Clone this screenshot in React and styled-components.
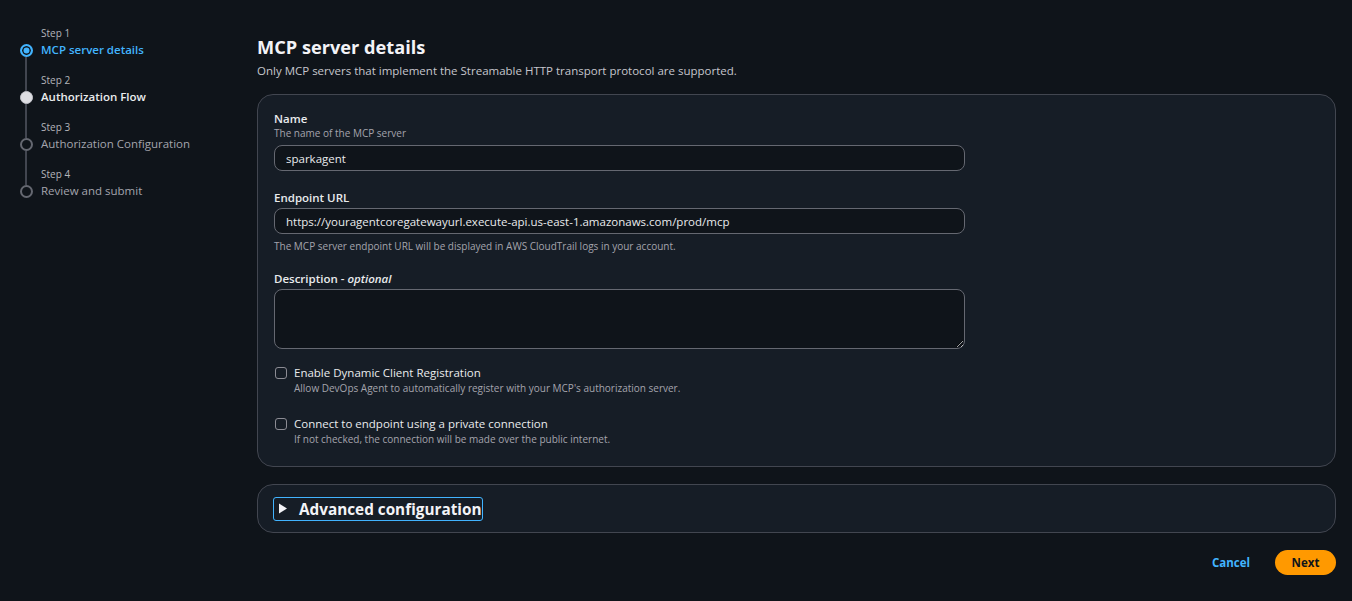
import React from 'react'
import styled, { createGlobalStyle } from 'styled-components'

const GlobalStyle = createGlobalStyle`
  html, body {
    margin: 0;
    padding: 0;
    background: #0f141a;
    color-scheme: dark;
  }
  body {
    font-family: "Open Sans", "Noto Sans", sans-serif;
    color: #dedee3;
  }
  * { box-sizing: border-box; }
`

const steps = [
  { label: 'Step 1', title: 'MCP server details', state: 'active' },
  { label: 'Step 2', title: 'Authorization Flow', state: 'next' },
  { label: 'Step 3', title: 'Authorization Configuration', state: 'pending' },
  { label: 'Step 4', title: 'Review and submit', state: 'pending' },
]

const App = () => {
  return (
    <>
      <GlobalStyle />
      <Page>
        <Sidebar>
          {steps.map((s, i) => (
            <Step key={s.label}>
              <Track>
                <Line $hidden={i === 0} $top />
                <Dot $state={s.state} />
                <Line $hidden={i === steps.length - 1} />
              </Track>
              <StepText>
                <StepLabel>{s.label}</StepLabel>
                <StepTitle $state={s.state}>{s.title}</StepTitle>
              </StepText>
            </Step>
          ))}
        </Sidebar>
        <Main>
          <Header>
            <h1>MCP server details</h1>
            <p>Only MCP servers that implement the Streamable HTTP transport protocol are supported.</p>
          </Header>
          <Card>
            <Field>
              <Label>Name</Label>
              <Hint $pos="top">The name of the MCP server</Hint>
              <Input defaultValue="sparkagent" />
            </Field>
            <Field>
              <Label>Endpoint URL</Label>
              <Input defaultValue="https://youragentcoregatewayurl.execute-api.us-east-1.amazonaws.com/prod/mcp" />
              <Hint $pos="bottom">The MCP server endpoint URL will be displayed in AWS CloudTrail logs in your account.</Hint>
            </Field>
            <Field $last>
              <Label>Description - <em>optional</em></Label>
              <TextArea />
            </Field>
            <CheckRow>
              <Box />
              <div>
                <CheckLabel>Enable Dynamic Client Registration</CheckLabel>
                <Hint>Allow DevOps Agent to automatically register with your MCP's authorization server.</Hint>
              </div>
            </CheckRow>
            <CheckRow>
              <Box />
              <div>
                <CheckLabel>Connect to endpoint using a private connection</CheckLabel>
                <Hint>If not checked, the connection will be made over the public internet.</Hint>
              </div>
            </CheckRow>
          </Card>
          <Expander>
            <ExpandButton>
              <svg width="10" height="11" viewBox="0 0 10 11">
                <polygon points="1,0.5 9,5.5 1,10.5" fill="#f3f3f7" />
              </svg>
              Advanced configuration
            </ExpandButton>
          </Expander>
          <Actions>
            <LinkButton>Cancel</LinkButton>
            <PrimaryButton>Next</PrimaryButton>
          </Actions>
        </Main>
      </Page>
    </>
  )
}

export default App

const Page = styled.div`
  display: flex;
  min-height: 601px;
`
const Sidebar = styled.nav`
  width: 257px;
  flex-shrink: 0;
  padding: 26px 0 0 20px;
`
const Step = styled.div`
  display: grid;
  grid-template-columns: 12px 1fr;
  column-gap: 9px;
  height: 47px;
`
const Track = styled.div`
  display: flex;
  flex-direction: column;
  align-items: center;
`
const Line = styled.span`
  width: 2px;
  background: ${p => (p.$hidden ? 'transparent' : '#424650')};
  ${p => (p.$top ? 'height: 17.5px;' : 'flex: 1;')}
`
const Dot = styled.span`
  width: 13px;
  height: 13px;
  border-radius: 50%;
  flex-shrink: 0;
  ${p =>
    p.$state === 'active'
      ? 'border: 2px solid #42b4ff; background: #42b4ff; box-shadow: inset 0 0 0 1.5px #0f141a;'
      : p.$state === 'next'
      ? 'background: #dedee3; border: 1px solid #c6c6cd;'
      : 'border: 2px solid #656871; background: transparent;'}
`
const StepText = styled.div`
  display: flex;
  flex-direction: column;
  gap: 2px;
`
const StepLabel = styled.span`
  font-size: 10px;
  line-height: 14px;
  color: #b4b4bb;
`
const StepTitle = styled.span`
  font-size: 11.5px;
  line-height: 16px;
  white-space: nowrap;
  font-weight: ${p => (p.$state === 'pending' ? 400 : 600)};
  color: ${p =>
    p.$state === 'active' ? '#42b4ff' : p.$state === 'next' ? '#e9ebed' : '#a4a4ad'};
`
const Main = styled.main`
  flex: 1;
  padding: 35px 16px 0 0;
`
const Header = styled.div`
  margin-bottom: 15px;
  h1 {
    margin: 0 0 4px;
    font-size: 18.2px;
    line-height: 24px;
    font-weight: 700;
    color: #f3f3f7;
  }
  p {
    margin: 0;
    font-size: 11.5px;
    line-height: 16px;
    color: #c6c6cd;
  }
`
const Card = styled.section`
  background: #161d26;
  border: 1px solid #424650;
  border-radius: 16px;
  padding: 16px 16px 21px;
  display: flex;
  flex-direction: column;
`
const Field = styled.div`
  display: flex;
  flex-direction: column;
  width: 691px;
  margin-bottom: ${p => (p.$last ? '16px' : '19px')};
`
const Label = styled.label`
  font-size: 11.5px;
  line-height: 16px;
  font-weight: 600;
  color: #e9ebed;
  margin-bottom: 2px;
  em { font-style: italic; font-weight: 600; }
`
const Hint = styled.div`
  font-size: 10px;
  line-height: 12px;
  color: #a4a4ad;
  margin: ${p =>
    p.$pos === 'top' ? '-2px 0 6px' : p.$pos === 'bottom' ? '6px 0 0' : '1px 0 0'};
`
const Input = styled.input`
  height: 26px;
  width: 100%;
  background: #0f141a;
  border: 1px solid #656871;
  border-radius: 8px;
  padding: 0 11px;
  font-family: "Open Sans", "Noto Sans", sans-serif;
  font-size: 11.5px;
  color: #e9ebed;
  outline: none;
`
const TextArea = styled.textarea`
  height: 60px;
  width: 100%;
  background: #0f141a;
  border: 1px solid #656871;
  border-radius: 8px;
  padding: 6px 11px;
  font-family: "Open Sans", "Noto Sans", sans-serif;
  font-size: 11.5px;
  color: #e9ebed;
  outline: none;
  resize: vertical;
`
const CheckRow = styled.div`
  display: flex;
  gap: 7px;
  align-items: flex-start;
  & + & { margin-top: 22px; }
`
const Box = styled.span`
  width: 12px;
  height: 12px;
  margin: 2px 0 0 1px;
  border: 1.5px solid #8c8c94;
  border-radius: 3px;
  flex-shrink: 0;
`
const CheckLabel = styled.div`
  font-size: 11.5px;
  line-height: 16px;
  color: #e9ebed;
`
const Expander = styled.section`
  margin-top: 17px;
  height: 49px;
  background: #161d26;
  border: 1px solid #424650;
  border-radius: 16px;
  padding: 0 15px;
  display: flex;
  align-items: center;
`
const ExpandButton = styled.button`
  display: flex;
  align-items: center;
  gap: 11px;
  height: 24px;
  padding: 0 1px 0 4px;
  background: transparent;
  border: 1px solid #42b4ff;
  border-radius: 3px;
  font-family: "Open Sans", "Noto Sans", sans-serif;
  font-size: 15.3px;
  font-weight: 700;
  color: #f3f3f7;
  cursor: pointer;
`
const Actions = styled.div`
  display: flex;
  justify-content: flex-end;
  align-items: center;
  gap: 25px;
  margin-top: 17px;
`
const LinkButton = styled.button`
  background: none;
  border: none;
  padding: 0;
  font-family: "Open Sans", "Noto Sans", sans-serif;
  font-size: 11.5px;
  font-weight: 700;
  color: #42b4ff;
  cursor: pointer;
`
const PrimaryButton = styled.button`
  width: 61px;
  height: 25px;
  border: none;
  border-radius: 13px;
  background: #ff9900;
  font-family: "Open Sans", "Noto Sans", sans-serif;
  font-size: 11.5px;
  font-weight: 700;
  color: #0f141a;
  cursor: pointer;
`
